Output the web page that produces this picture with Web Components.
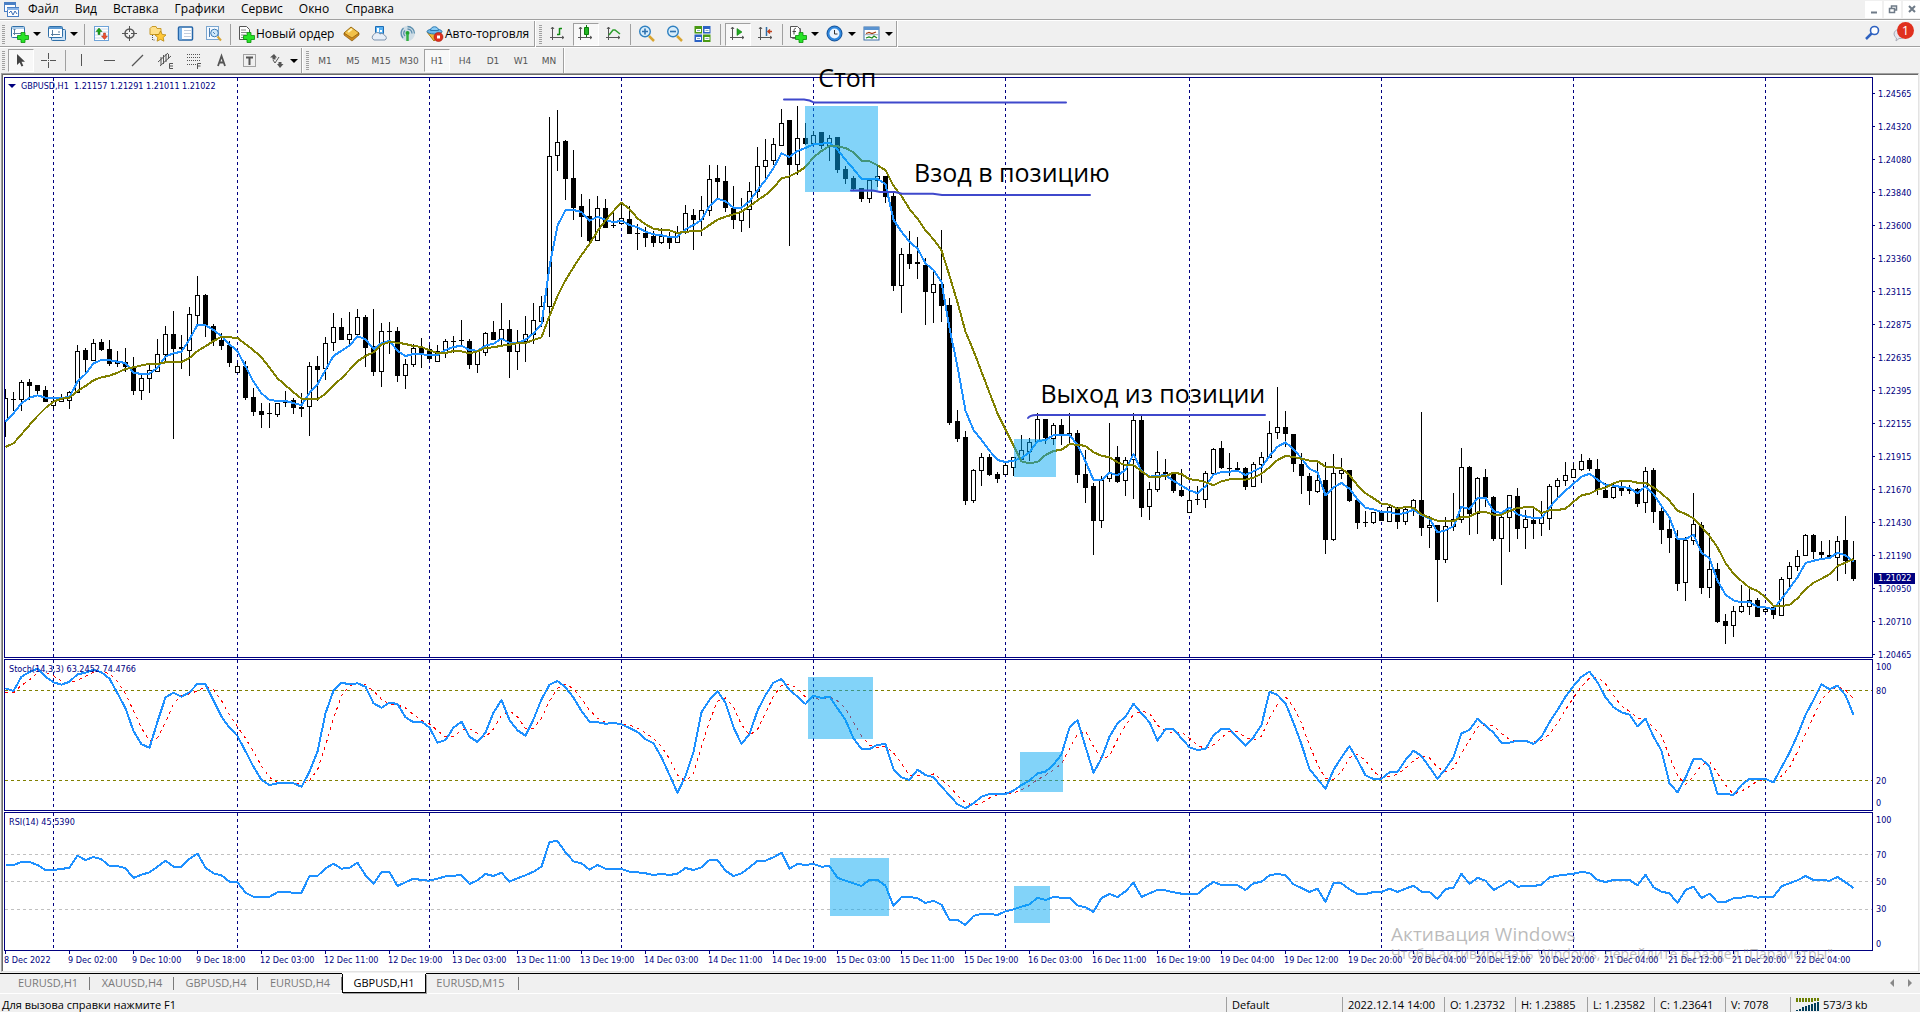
<!DOCTYPE html>
<html lang="ru">
<head>
<meta charset="utf-8">
<title>GBPUSD,H1</title>
<style>
html,body{margin:0;height:100%}
body{background:#f0f0f0;font:12px/16px "Open Sans","Noto Sans",sans-serif;color:#000;--navy:#000080;--tiny:9px/12px "DejaVu Sans Condensed","DejaVu Sans",sans-serif}
</style>
</head>
<body>
<trade-terminal></trade-terminal>
<script>
/* ---------- icons ---------- */
const AX='<path d="M3.500 2v13M1 12.500h14M2 4l1.500-2L5 4M13 11l2 1.500-2 1.500" fill="none" stroke="#555"/>';
const PLUS='<path d="M10 7.500h4v3h3.500v4H14v3h-4v-3H6.500v-4H10z" fill="#27e327" stroke="#0a8f0a" stroke-width=".8"/>';
const ICONS={
app:'<rect x="1.500" y="1.500" width="11" height="9" fill="#fff" stroke="#4a7fc4"/><path d="M1 3h12" stroke="#4a7fc4" stroke-width="2"/><rect x="4.500" y="6.500" width="11" height="9" fill="#fff" stroke="#4a7fc4"/><path d="M4 8h12" stroke="#8ab4e8" stroke-width="2"/><path d="M6 12l2-2 2 4 2-4 2 3" fill="none" stroke="#3d6fb5"/>',
newchart:'<rect x="0.500" y="1.500" width="13" height="11" rx="1" fill="#fff" stroke="#2f6fa8"/><path d="M1 3h12.500" stroke="#5d9ad3"/><path d="M3.500 4v6M2 8.500h9M2.500 5l1-1 1 1" fill="none" stroke="#5a7fa0"/>'+PLUS,
profiles:'<rect x="3.500" y="4.500" width="14" height="11" rx="1" fill="#cfe4f7" stroke="#2f6fa8"/><rect x="0.500" y="1.500" width="14" height="11" rx="1" fill="#fff" stroke="#2f6fa8"/><path d="M1 3h13" stroke="#5d9ad3" stroke-width="2"/><path d="M4.500 5v6M3 9.500h9M10.500 6l1 1-1 1" fill="none" stroke="#5a7fa0"/>',
market:'<rect x="1.500" y="1.500" width="14" height="14" fill="#fff" stroke="#6ea3d8"/><path d="M2 4h13M2 7h13M2 10h13M2 13h13" stroke="#c9d8ea"/><path d="M6 3l3 3.500H7V9.500H5V6.500H3z" fill="#1da51d" stroke="#0b700b" stroke-width=".5"/><path d="M11.500 14.500l3-3.500h-2V8h-2v3h-2z" fill="#f0502c" stroke="#a82a10" stroke-width=".5"/>',
cross:'<circle cx="8.500" cy="8.500" r="4.500" fill="none" stroke="#555" stroke-width="1.500"/><path d="M8.500 1v6M8.500 10v6M1 8.500h6M10 8.500h6" stroke="#555"/>',
folder:'<path d="M1 3.500l2-2h4l1 2h4v6H1z" fill="#ffe08a" stroke="#c79a2a"/><path d="M3.500 10v5h3" fill="none" stroke="#555" stroke-dasharray="1 1"/><path d="M11.500 6l1.700 3.400 3.800.5-2.800 2.600.7 3.700-3.400-1.800-3.400 1.800.7-3.700L6 9.900l3.800-.5z" fill="#ffc83a" stroke="#b8860b" stroke-width=".8"/>',
nav:'<rect x="1.500" y="2" width="14" height="13" rx="1" fill="#fff" stroke="#2565a8" stroke-width="1.500"/><path d="M2 3h3v11.500H2z" fill="#7db4e8"/><path d="M7 5.500h7M7 8.500h7M7 11.500h7" stroke="#c3cedd"/>',
tester:'<rect x="1.500" y="1.500" width="12" height="13" fill="#f4f9ff" stroke="#7ba6cf"/><path d="M4.500 3v9M7.500 5v6" stroke="#4a7fb4"/><circle cx="9.500" cy="8" r="3.800" fill="#cfe8fa" stroke="#3c7ab5"/><path d="M8 7l2 2" stroke="#4a7fb4"/><path d="M12.500 11.500l3.500 4" stroke="#d9a531" stroke-width="2"/>',
order:'<path d="M2.500 1.500h7l3 3v10h-10z" fill="#fff" stroke="#555"/><path d="M4 5h5M4 7.500h6M4 10h5M4 12.500h3" stroke="#888"/>'+PLUS,
book:'<path d="M1 8l7-6 8 6-7 7z" fill="#f2c14a" stroke="#9a6a10"/><path d="M1 8l8 5 7-5v2l-7 6-8-6z" fill="#d08a1e" stroke="#8a5a0c" stroke-width=".7"/><path d="M5 7l4-3" stroke="#fff3b8" stroke-width="2"/>',
term:'<path d="M4.500 1.500h8v7h-8z" fill="#58b0f0" stroke="#1c6cb5"/><path d="M6 3h2v4H6zM9 5h2v2H9z" fill="#fff"/><path d="M3 15a3 3 0 010-5.500A3.500 3.500 0 019 9a3 3 0 014.500 1.500A2.400 2.400 0 0114 15z" fill="#e7eef7" stroke="#7d93ad"/>',
signal:'<circle cx="8.500" cy="8.500" r="7.500" fill="#cfdde6"/><path d="M8.500 1.500a7 7 0 017 7M8.500 4a4.500 4.500 0 014.500 4.500M4 13a7 7 0 01.5-10M6 11a4 4 0 010-5.500" fill="none" stroke="#5d8fae" stroke-width="1.300"/><circle cx="8.500" cy="8" r="2" fill="#1fa32f"/><path d="M8.500 9v7" stroke="#35b045" stroke-width="2.500"/>',
auto:'<path d="M1 7l7 9 8-9z" fill="#f0b93a" stroke="#a87612"/><ellipse cx="8.500" cy="6.500" rx="7.500" ry="2.500" fill="#6db8ea" stroke="#2c78b0"/><path d="M4.500 5.500c0-5 8-5 8 0z" fill="#8accf5" stroke="#2c78b0"/><circle cx="12.500" cy="12" r="4.500" fill="#e0301e" stroke="#a3160b" stroke-width=".6"/><path d="M11 10.500h3v3h-3z" fill="#fff"/>',
bars:AX+'<path d="M10.500 3v7M8 9.500h2.500M10.500 3.500H13" fill="none" stroke="#118a11" stroke-width="1.500"/>',
candles:AX+'<path d="M9.500 0v12" stroke="#0b7d0b"/><path d="M7.500 2.500h4v7h-4z" fill="#22b522" stroke="#0b7d0b"/>',
line:AX+'<path d="M4 10l4-5 2 0 5 4" fill="none" stroke="#2e9e2e" stroke-width="1.500"/>',
zin:'<circle cx="7" cy="6.500" r="5.300" fill="#d8edfb" stroke="#2f80c0" stroke-width="1.400"/><path d="M4 6.500h6M7 3.500v6" stroke="#2f72b0" stroke-width="1.600"/><path d="M11 11l5 5" stroke="#d9a531" stroke-width="2.500"/>',
zout:'<circle cx="7" cy="6.500" r="5.300" fill="#d8edfb" stroke="#2f80c0" stroke-width="1.400"/><path d="M4 6.500h6" stroke="#2f72b0" stroke-width="1.600"/><path d="M11 11l5 5" stroke="#d9a531" stroke-width="2.500"/>',
tile:'<path d="M.5 1h7.500v7.500H.5zM9 9.500h7.500V17H9z" fill="#4a9a14"/><path d="M9 1h7.500v7.500H9zM.5 9.500h7.500V17H.5z" fill="#2c62c4"/><path d="M2 4h5v3H2zM10.500 4h5v3h-5zM2 12h5v3H2zM10.500 12h5v3h-5z" fill="#fff"/><path d="M3 5.500h3M11.500 5.500h3M3 13.500h3M11.500 13.500h3" stroke="#8ab"/>',
scroll:AX+'<path d="M8 3.500v7l5-3.500z" fill="#22a822" stroke="#0b7d0b" stroke-width=".6"/>',
shift:AX+'<path d="M9.500 2v9" stroke="#2f6fa8" stroke-width="1.500"/><path d="M15 6.500h-4M13 4.500l-2 2 2 2" fill="none" stroke="#c2401c" stroke-width="1.500"/>',
indi:'<path d="M3.500 3.500h8v10h-8z" fill="#eee" stroke="#777"/><path d="M1.500 1.500h7l2.500 2.500v8.500h-9.500z" fill="#fff" stroke="#555"/><path d="M7 3.500c-2-.5-2 1-2 6M3.500 6.500H7" fill="none" stroke="#444"/>'+PLUS,
clock:'<circle cx="8.500" cy="8.500" r="7.500" fill="#2d86dd" stroke="#0e4c94"/><circle cx="8.500" cy="8.500" r="5" fill="#eaf4fd"/><path d="M8.500 5v4h3" fill="none" stroke="#333"/>',
tmpl:'<rect x="1" y="2" width="15" height="13" fill="#fff" stroke="#3b6fa8"/><path d="M1 3.500h15" stroke="#5a93d0" stroke-width="3"/><path d="M3 8.500l3-1 3 1 4-1.500" fill="none" stroke="#a33c10" stroke-width="1.300"/><path d="M2 9.700h13" stroke="#9ab"/><path d="M3 13l3-1 3 1 2-2 3 2" fill="none" stroke="#1c8a1c" stroke-width="1.300"/>',
cursor:'<path d="M5 2v11l2.700-2.500 1.800 4 1.800-.8-1.800-4H13z" fill="#444"/>',
thin:'<path d="M8.500 1v6M8.500 10v6M1 8.500h6M10 8.500h6M8 8.500h1" stroke="#555"/>',
vl:'<path d="M8.500 2v12" stroke="#555"/>',
hl:'<path d="M3 8.500h11" stroke="#555"/>',
tl:'<path d="M3 14L14 3" stroke="#555" stroke-width="1.300"/>',
ch:'<path d="M1 10L11 1M3 14L14 4M4 5v8M6.500 3v9M9 2v8M11.500 2v5" stroke="#555" fill="none"/><path d="M16 11.500h-3.500v5H16M12.500 14H16" fill="none" stroke="#555"/>',
fib:'<path d="M2 2.500h13M2 5.500h13M2 8.500h13M2 12.500h9" stroke="#555" stroke-dasharray="1 1"/><path d="M12.500 17v-5.500H16M12.500 14h3" fill="none" stroke="#555"/>',
lbl:'<rect x="2.500" y="2.500" width="12" height="12" fill="none" stroke="#555" stroke-dasharray="1 1"/><path d="M5 5.500h7M8.500 5v8" stroke="#555" stroke-width="2" fill="none"/>',
txt:'<path d="M5 14L8.500 4 12 14M6 10.500h5" stroke="#555" stroke-width="1.800" fill="none"/>',
arr:'<path d="M2 5.500l4-3.500 3 3.500-1.500 0 0 2-3 0 0-2zM9 12l1.500 0 0-2 3 0 0 2 2 0-3.500 4z" fill="#555"/><path d="M5 8l2 3 4-6" fill="none" stroke="#555"/>',
find:'<circle cx="10.500" cy="5.500" r="4" fill="#fff" stroke="#2f62c0" stroke-width="1.600"/><path d="M7.500 8.500L2 14" stroke="#2f62c0" stroke-width="2.500"/>',
chat:'<path d="M2 9a6 5 0 1112 0 6 5 0 01-7 4.500L4 16l.5-3A5 5 0 012 9z" fill="#e4e6ee" stroke="#a9acb8"/>',
conn:'<path d="M1 1v4M4 1v4M7 1v4M10 1v4M13 1v4M16 1v4M19 1v3M22 1v3" stroke="#6b7f00" stroke-width="2"/><path d="M1 14v-1M4 14v-2M7 14V10M10 14V9M13 14V8M16 14V7M19 14V6M22 14V5" stroke="#003c5a" stroke-width="2"/>'
};
const def=(tag,css,html)=>customElements.define(tag,class extends HTMLElement{
  connectedCallback(){
    if(this.shadowRoot)return;
    const r=this.attachShadow({mode:'open'});
    r.innerHTML='<style>'+css+'</style>'+(typeof html==='function'?html(this):html);
  }
});
def('mt-icon',':host{display:block}svg{display:block}',e=>{
  const w=+(e.getAttribute('w')||18);
  return `<svg width="${w}" height="18" viewBox="0 0 ${w} 18" aria-hidden="true">${ICONS[e.getAttribute('name')]}</svg>`;
});

/* ---------- tool bars ---------- */
def('tool-button',`:host{display:flex;width:28px}
:host([menu]){width:37px}:host([wide]){width:105px}:host([wide=more]){width:112px}
button{all:unset;box-sizing:border-box;flex:1;display:flex;align-items:center;justify-content:center;height:23px;white-space:nowrap;color:#000;border:1px solid transparent;margin:0 1px}
:host([wide]) button{justify-content:flex-start;padding-left:2px;gap:1px}
:host([on]) button{border-color:#a0a0a0 #fff #fff #a0a0a0;background:#f8f8f8}
:host([period]) button{color:#555;font:9px/12px "DejaVu Sans",sans-serif}
i{border:4px solid transparent;border-top-color:#000;border-bottom:0;margin-left:4px}`,
e=>`<button title="${e.title}" aria-pressed="${e.hasAttribute('on')}">${e.getAttribute('icon')?`<mt-icon name="${e.getAttribute('icon')}"></mt-icon>`:''}<slot></slot>${e.hasAttribute('menu')?'<i></i>':''}</button>`);
def('tool-group',`:host{display:flex;align-items:center;box-sizing:border-box;height:100%;border-right:1px solid #a0a0a0;box-shadow:1px 0 #fff;margin-right:2px}
.g{width:3px;height:19px;margin:0 2px;background:repeating-linear-gradient(#a0a0a0 0 1px,#f0f0f0 1px 2px)}`,'<span class="g"></span><slot></slot>');
def('tool-sep',':host{display:block;width:1px;height:21px;background:#a0a0a0;margin:0 var(--gap,3px)}','');
def('tool-row',':host{display:flex;align-items:center;box-sizing:border-box;height:27px;border-bottom:1px solid #fff;box-shadow:inset 0 -1px #a0a0a0}:host([last]){height:25px;border:0;box-shadow:none}','<slot></slot>');

/* ---------- menu ---------- */
def('menu-bar',`:host{display:flex;align-items:center;box-sizing:border-box;height:21px;padding-left:3px;border-bottom:1px solid #fff;box-shadow:inset 0 -1px #a0a0a0}
nav{display:flex;flex:1;margin-left:-1px}
a{color:#000;text-decoration:none;padding:0 8px 2px}
button{all:unset;width:17px;height:17px;background:#fff;margin:0 0 2px 2px;display:grid;place-items:center}`,
()=>`<mt-icon name="app"></mt-icon><nav>${['Файл','Вид','Вставка','Графики','Сервис','Окно','Справка'].map(t=>`<a href="#">${t}</a>`).join('')}</nav>
${['M2 8.500h6','M1.500 4.500h5v4h-5zM3.500 4V2h5v4H7','M2 2l6 6M8 2l-6 6'].map((d,i)=>`<button title="${['Свернуть','Восстановить','Закрыть'][i]}"><svg width="10" height="10"><path d="${d}" fill="none" stroke="#6f7b88" stroke-width="${i==1?1.5:2}"/></svg></button>`).join('')}`);

/* ---------- quotes: high, body top, body bottom, low, body kind; one entry per bar ---------- */
const BARS=[[70,`958,985,1050,1102w 966,987,990,1025b 930,937,989,1025w 928,936,948,992b 945,945,963,975b 950,960,998,998b 985,993,1007,1018w 972,985,995,998w 963,967,992,1017w 826,844,968,971w 834,840,870,910b 807,820,871,873w 807,816,840,843b 811,837,882,890b 843,878,882,893b 834,876,893,908b 861,891,963,977b 914,925,961,992w 885,900,925,971w 807,853,905,906w 768,793,854,880w 723,792,837,1109b 795,833,837,899b 711,733,842,920w 618,676,737,765w 672,675,767,801b 764,768,815,830b 790,810,828,842b 815,825,879,893b 880,889,907,910w 873,888,984,990b 954,981,1026,1038b 1000,1023,1035,1076b 1000,1031,1034,1074b 1000,1000,1034,1041w 965,996,1001,1012b 985,992,1014,1034b 969,1011,1017,1041b 876,889,1010,1100w 858,888,900,995b 801,820,895,930w 729,772,818,843w 744,771,810,812b 726,793,808,832w 717,742,794,797w 735,741,834,893b 717,828,906,920b 759,784,905,953w 757,783,788,852b 773,783,918,936b 868,883,916,957w 824,836,883,891w 804,832,854,896b 825,838,869,872b 825,845,875,877w 808,814,850,866w 798,813,818,849b 750,810,815,832b 807,813,885,897b 840,845,884,911w
786,790,848,860w 753,786,810,811b 699,778,806,830w 750,777,846,926b 780,818,845,902w 738,793,815,876w 701,751,793,822w 678,709,755,772w 141,259,710,801w 120,217,257,303w 210,213,327,390b 240,324,414,450b 372,408,441,501b 387,438,513,522b 378,415,512,515w 387,414,474,474b 429,467,470,474b 400,445,460,461w 408,447,492,492b 463,489,494,540b 473,489,504,531b 485,500,519,531b 474,499,518,522w 487,504,519,537b 468,487,518,519w 405,430,487,492w 417,435,450,540b 378,421,448,498w 285,328,421,440w 285,324,336,385b 288,333,414,427b 348,414,450,477b 384,425,450,486w 336,364,418,474w 231,289,365,386w 208,271,290,328w 205,223,272,285w 117,160,226,228w 150,150,285,528b 108,205,283,315w 159,204,222,225b 183,196,221,227w 186,186,228,237b 195,205,226,273w 201,201,300,309b 288,297,327,342b 320,324,357,362b 354,354,387,396b 325,331,385,399w 288,319,330,351w 318,318,381,399b 368,378,648,665b 534,553,647,729w 484,552,582,597b 501,576,584,627b 564,585,668,765b 605,643,668,759w 480,642,708,756b 685,705,1059,1065b 1020,1053,1107,1116b
1083,1101,1293,1305b 1197,1201,1292,1299w 1151,1162,1202,1248w 1152,1161,1215,1218b 1206,1212,1227,1239b 1180,1187,1213,1217w 1162,1162,1192,1220w 1095,1141,1167,1176w 1104,1117,1143,1173w 1029,1048,1115,1118w 1047,1047,1104,1122b 1061,1066,1106,1125w 1047,1065,1100,1125b 1029,1090,1096,1124w`],
[360,`210,219,345,369b 271,342,384,430b 370,378,483,585b 349,360,482,504w 189,339,355,367w 258,291,366,369b 291,301,362,408w 159,181,299,417w 165,180,444,471b 366,388,440,480w 273,337,388,396w 297,336,342,362b 337,343,393,399b 327,390,408,411b 395,421,458,460w 378,417,420,436b 333,340,419,444w 264,268,340,345w 243,264,325,328b 279,324,329,348b 306,324,330,333b 321,324,381,390b 306,313,380,381w 276,292,313,369w 183,220,291,293w 81,202,217,237w 153,201,222,262b 222,222,312,336b 280,312,348,402b 339,348,393,435b 306,361,395,399w 306,360,540,582b 282,340,539,543w 294,331,341,357w 330,330,423,426b 420,420,489,507b 453,486,489,501b 457,457,488,492w 457,457,483,484b 437,442,485,487w 441,441,486,507b 443,448,485,495w
417,421,451,468w 156,420,504,528b 470,496,503,564w 495,495,600,726b 471,499,599,609w 399,478,499,513w 264,322,478,489w 318,321,462,525b 351,355,460,522w 327,351,414,441b 408,411,537,543b 456,472,536,675w 405,406,472,576w 384,408,507,537b 450,478,503,567w 445,480,492,537b 423,472,490,528w 372,379,475,510w 354,361,379,416w 306,346,361,378w 310,328,352,354w 282,304,328,333w 294,300,327,333b 297,327,390,405b 369,390,414,415b 372,382,412,417w 360,380,393,409b 375,389,393,402b 384,387,432,441b 321,334,427,459w 324,330,456,489b 432,453,510,552b 469,507,534,579b 510,534,672,693b 531,541,667,723w 399,492,541,557w 486,495,684,702b 519,628,682,714w 609,627,786,789b 762,783,798,852b 739,754,796,831w 675,739,754,759w 684,721,739,765w 714,720,771,771b 738,748,755,760w 735,742,765,777b 651,658,766,768w 606,619,655,684w 570,589,619,633w 522,526,586,588w 522,525,578,598b 543,576,587,594b 540,585,592,598b 528,544,592,663w 468,540,603,642b 543,600,657,663b`]];
const FAST=[[70,'1055 1030 1000 983 976 983 984 984 981 935 912 880 870 871 875 879 908 912 911 893 860 850 845 808 764 766 780 798 823 844 889 935 970 990 993 993 999 1006 969 943 900 858 842 827 799 808 837 820 812 843 858 852 853 855 855 840 831 827 840 842 827 821 806 818 819 809 790 763 590 467 420 420 426 452 440 450 457 452 465 472 485 493 496 501 500 478 465 450 408 386 394 413 413 394 361 330 294 250 261 243 234 223 221 218 239 269 297 326 326 326 343 449 485 515 536 580 600 636 775 890 1022 1080 1110 1142 1170 1176 1172 1164 1147 1114 1110 1096 1095 1095'],
[360,'255 304 360 360 338 346 330 282 333 350 347 346 362 377 391 400 379 344 336 335 332 345 334 322 288 260 247 268 295 327 337 406 382 369 386 418 444 448 456 456 463 459 449 466 475 517 511 499 440 447 414 413 454 459 443 463 469 474 474 443 414 392 371 350 341 359 374 377 381 384 400 379 402 438 472 537 537 524 578 595 662 704 721 727 726 740 742 748 717 685 652 609 602 597 594 578 586 605']];
const SLOW=[[70,'1131 1120 1093 1065 1038 1014 995 986 983 963 948 931 922 917 908 897 892 886 882 882 877 876 876 864 843 829 813 800 802 804 822 841 862 893 925 946 967 986 987 987 972 946 925 900 874 858 847 824 816 818 822 828 831 841 849 849 843 844 850 844 834 832 827 824 820 819 810 802 738 678 631 592 555 522 483 452 423 398 417 445 463 476 480 481 489 485 484 482 465 449 440 433 425 409 391 375 353 325 319 307 291 262 243 228 229 234 247 272 274 286 301 347 378 417 446 481 508 541 617 697 785 842 905 968 1030 1078 1127 1174 1180 1176 1155 1143 1139 1123'],
[360,'254 258 277 287 292 307 315 315 334 351 350 349 338 342 358 360 367 376 364 358 357 359 353 341 322 300 288 291 296 302 304 320 322 325 345 376 400 415 431 434 446 441 443 463 473 482 484 483 471 470 457 456 464 464 453 444 442 442 459 451 450 446 425 406 401 389 383 370 362 363 368 369 382 400 422 452 462 475 500 528 562 609 641 663 683 693 712 738 738 735 715 688 668 656 643 618 608 597']];
const STOCH=[[650,'115 123 80 66 56 80 97 104 95 73 68 59 67 86 130 175 243 283 293 215 142 128 140 127 101 103 152 200 233 258 304 350 390 405 400 398 400 410 365 305 190 122 98 103 100 110 160 173 158 162 202 217 215 233 278 270 233 215 260 276 248 188 150 210 241 257 208 148 104 93 112 143 183 215 217 221 219 223 234 246 268 280 322 375 428 378 305 187 150 123 158 232 282 252 182 135 98 87 120 140 162 137 144 140 175 210 265 297 297 284 283 358 382 390 359 375 382 410 436 463 475 460 440 432 432 432 422 405 392 370 365 344 313 233 210 290 368 325 260 220 200 161 190 217 272 237 237 265 292 300 297 256 237 237 262 288 262 225 125 135 160 218 283 357 387 416 360 322 288 330 376 387 386 367 366 330 302 318 352 386 357 322 250 240 206 227 248 278 278 272 272 282 260 217 180 140 108 80 65 97 142 172 187 194 229 206 260 302 400 427 383 327 327 350 432 432 435 405 387 387 387 397 352 308 255 195 150 103 118 107 136 195']];
const RSI=[[650,'645 645 636 636 645 660 660 657 653 617 630 621 628 648 648 655 684 674 667 650 632 650 650 626 611 653 670 676 695 697 728 740 740 740 727 726 728 728 678 678 655 641 656 653 638 676 702 666 666 708 697 686 690 692 686 679 677 675 702 691 672 678 668 695 685 676 665 650 576 573 607 634 640 659 645 656 657 657 665 667 670 675 672 675 671 654 660 652 630 630 662 678 670 652 633 632 622 608 656 642 645 642 650 648 683 692 700 708 690 690 707 768 741 741 745 759 752 764 810 810 825 798 791 792 795 784 778 770 763 743 750 741 743 743 766 772 786 744 732 741 724 698 741 730 720 721 727 731 732 732 712 696 705 705 706 720 700 695 676 672 676 703 714 726 716 756 700 700 718 732 732 726 726 716 726 716 707 725 726 747 717 713 671 702 683 692 720 707 692 710 708 708 704 682 677 674 671 666 669 690 696 690 690 690 706 674 712 725 730 759 720 710 744 731 756 756 745 743 737 743 740 740 709 700 691 678 690 690 692 681 697 714']];
const unpack=g=>g.flatMap(([base,s])=>s.split(/\s+/).map(v=>base+v/3));
const X=i=>5+8*i;
const path=(v,c,w=2,extra='')=>`<polyline points="${v.map((y,i)=>X(i)+.5+','+y.toFixed(1)).join(' ')}" fill="none" stroke="${c}" stroke-width="${w}" stroke-linejoin="round" ${extra}/>`;
const candles=()=>{let i=0,o='';
  for(const [base,s] of BARS)for(const q of s.split(/\s+/)){
    const [h,t,b,l]=q.slice(0,-1).split(',').map(v=>Math.floor(base+v/3)),x=X(i++);
    o+=`<path d="M${x}.5 ${h}V${l}" stroke="#000"/>`;
    o+=q.endsWith('b')?`<rect x="${x-2}" y="${t}" width="5" height="${Math.max(1,b-t)}"/>`
      :`<rect x="${x-1.5}" y="${t+.5}" width="4" height="${Math.max(2,b-t)}" fill="#fff" stroke="#000"/>`;
  }return o};
const DAYS=[53,237,429,621,813,1005,1189,1381,1573,1765];
const days=(a,b)=>DAYS.map(x=>`<path d="M${x}.5 ${a}V${b}" stroke="#000080" stroke-dasharray="3 3"/>`).join('');
const level=(y,c)=>`<path d="M5 ${y}.5H1872" stroke="${c}" stroke-dasharray="3 3"/>`;
const zone=(x,y,w,h)=>`<rect x="${x}" y="${y}" width="${w}" height="${h}" fill="#05a8f3" fill-opacity=".5"/>`;
const pen=d=>`<path d="${d}" fill="none" stroke="#3f48cc" stroke-width="2" stroke-linecap="round"/>`;
const sig=unpack(STOCH);
const avg=sig.map((v,i)=>(v+(sig[i-1]??v+4)+(sig[i-2]??v+8))/3);
const PANES={
 price:{top:78,h:579,draw:()=>`<g shape-rendering="crispEdges">${days(78,657)}${candles()}${path(unpack(FAST),'#1e90ff')}${path(unpack(SLOW),'#808000')}${zone(805,106,73,86)}${zone(1014,439,42,38)}</g>`
  +pen('M784 99.500H804Q810 100 814 102.500H1066')+pen('M851 190.500H873L880 192H895L902 193.700H933L942 195H1090')+pen('M1028 418Q1030 415.200 1036 415H1265')},
 stoch:{top:660,h:150,draw:()=>`<g shape-rendering="crispEdges">${days(660,810)}${level(690,'#808000')}${level(780,'#808000')}${path(avg,'#f00',1,'stroke-dasharray="3 4"')}${path(sig,'#1e90ff')}${zone(808,677,65,62)}${zone(1020,752,43,40)}</g>`},
 rsi:{top:813,h:137,draw:()=>`<g shape-rendering="crispEdges">${days(813,950)}${level(854,'#c0c0c0')}${level(881,'#c0c0c0')}${level(909,'#c0c0c0')}${path(unpack(RSI),'#1e90ff')}${zone(830,858,59,58)}${zone(1014,886,36,37)}</g>`}
};
def('chart-pane',`:host{display:grid;grid-template-columns:minmax(0,1fr) 45px;min-height:0}
.plot{position:relative;min-height:0;border:1px solid var(--navy)}
svg{position:absolute;inset:0;width:100%;height:100%;display:block}
.t{position:absolute;left:4px;top:3px;display:flex;align-items:center;gap:5px;font:var(--tiny);color:var(--navy);white-space:pre}
:host([kind=price]) .t{left:3px;top:2px}`,
e=>{const p=PANES[e.getAttribute('kind')];return `<div class="plot"><svg viewBox="5 ${p.top} 1867 ${p.h}" preserveAspectRatio="none" role="img">${p.draw()}</svg><div class="t"><slot></slot></div></div><slot name="axis"></slot>`});
def('price-axis',`:host{display:flex;flex-direction:column;justify-content:space-between;position:relative;padding-top:11px;box-sizing:border-box;font:var(--tiny);color:var(--navy)}
span{display:flex;align-items:center;height:11px}span::before{content:"";width:2px;height:1px;background:var(--navy);margin-right:3px}
b{position:absolute;left:1px;right:3px;top:85.3%;height:11px;line-height:11px;background:var(--navy);color:#fff;font-weight:400;padding-left:4px;box-sizing:border-box}
span:last-of-type{margin-bottom:-2px}`,
()=>'24565 24320 24080 23840 23600 23360 23115 22875 22635 22395 22155 21915 21670 21430 21190 20950 20710 20465'.split(' ').map(v=>`<span>1.${v}</span>`).join('')+'<b>1.21022</b>');
def('level-axis',':host{display:block;position:relative;font:var(--tiny);color:var(--navy)}span{position:absolute;left:3px;transform:translateY(-50%)}',
e=>e.getAttribute('marks').split(' ').map(m=>{const [v,p]=m.split(':');return `<span style="top:${p}%">${v}</span>`}).join(''));
def('time-axis',':host{display:flex;height:20px;box-sizing:border-box;font:var(--tiny);color:var(--navy);overflow:hidden}span{flex:none;width:64px;white-space:nowrap}span::before{content:"";display:block;width:1px;height:3px;margin:0 0 0 1px;background:var(--navy)}',
()=>'8 Dec 2022|9 Dec 02:00|9 Dec 10:00|9 Dec 18:00|12 Dec 03:00|12 Dec 11:00|12 Dec 19:00|13 Dec 03:00|13 Dec 11:00|13 Dec 19:00|14 Dec 03:00|14 Dec 11:00|14 Dec 19:00|15 Dec 03:00|15 Dec 11:00|15 Dec 19:00|16 Dec 03:00|16 Dec 11:00|16 Dec 19:00|19 Dec 04:00|19 Dec 12:00|19 Dec 20:00|20 Dec 04:00|20 Dec 12:00|20 Dec 20:00|21 Dec 04:00|21 Dec 12:00|21 Dec 20:00|22 Dec 04:00'.split('|').map(t=>`<span>${t}</span>`).join(''));
def('chart-note',':host{position:absolute;font:25px/32px "Open Sans","Noto Sans",sans-serif;color:#000;white-space:nowrap}:host([mark]){font-size:19px;line-height:24px;color:rgba(120,120,120,.5)}','<slot></slot>');
def('chart-window',`:host{position:relative;display:flex;flex-direction:column;gap:1px;flex:1;min-height:0;box-sizing:border-box;background:#fff;border:1px solid #a0a0a0;border-right-color:#e3e3e3;border-bottom-color:#e3e3e3;box-shadow:inset 1px 1px #696969;padding:3px 0 0 2px;margin:0 1px 1px}
chart-pane{flex:var(--g) 1 0}chart-pane:last-of-type{margin-bottom:-1px}
p{margin:0;font-size:14px;line-height:16px}
.arrow{border:4px solid transparent;border-top-color:var(--navy);border-bottom:0}`,
`<chart-pane kind="price" style="--g:581"><span class="arrow"></span><span>GBPUSD,H1  1.21157 1.21291 1.21011 1.21022</span><price-axis slot="axis"></price-axis></chart-pane>
<chart-pane kind="stoch" style="--g:152"><span>Stoch(14,3,3) 63.2452 74.4766</span><level-axis slot="axis" marks="100:5 80:21 20:80 0:95"></level-axis></chart-pane>
<chart-pane kind="rsi" style="--g:139"><span>RSI(14) 45.5390</span><level-axis slot="axis" marks="100:6 70:31 50:50 30:70 0:95"></level-axis></chart-pane>
<time-axis></time-axis>
<chart-note style="left:42.600%;top:-13px">Стоп</chart-note>
<chart-note style="left:47.600%;top:9.100%">Взод в позицию</chart-note>
<chart-note style="left:54.200%;top:33.800%">Выход из позиции</chart-note>
<chart-note mark style="left:72.500%;top:94.500%">Активация Windows<p>Чтобы активировать Windows, перейдите в раздел "Параметры".</p></chart-note>`);

/* ---------- bottom bars ---------- */
def('chart-tabs',`:host{display:flex;align-items:flex-start;height:21px;box-sizing:border-box;border-top:1px solid #000;border-bottom:1px solid #fff;padding-left:6px;font-size:11px}
button{all:unset;box-sizing:border-box;width:84px;height:18px;line-height:18px;text-align:center;color:#7a7a7a;background:linear-gradient(#7a7a7a,#7a7a7a) right center/1px 13px no-repeat}
button.on{color:#000;background:#fff;border:1px solid #000;border-top:0;height:19px;box-shadow:0 -1px #fff,1px 1px #a0a0a0}
button:last-of-type{width:93px;padding-right:4px}
i{border:4px solid transparent;margin-top:5px}.l{margin-left:auto;border-right-color:#888;border-left:0}.r{border-left-color:#888;border-right:0;margin:5px 8px 0 14px}`,
()=>['EURUSD,H1','XAUUSD,H4','GBPUSD,H4','EURUSD,H4','GBPUSD,H1','EURUSD,M15'].map((t,i)=>`<button${i==4?' class="on"':''}>${t}</button>`).join('')+'<i class="l"></i><i class="r"></i>');
def('status-bar',`:host{display:flex;height:18px;align-items:flex-end;font-size:11px}
span{box-sizing:border-box;height:15px;line-height:16px;padding-left:5px;border-left:1px solid #a0a0a0;white-space:nowrap;display:flex}
span:first-of-type{flex:1;border:0;padding-left:2px}mt-icon{margin-right:3px}`,
`<span>Для вызова справки нажмите F1</span><span style="width:116px">Default</span><span style="width:102px">2022.12.14 14:00</span><span style="width:71px">O: 1.23732</span><span style="width:72px">H: 1.23885</span><span style="width:67px">L: 1.23582</span><span style="width:71px">C: 1.23641</span><span style="width:65px">V: 7078</span><span style="width:130px"><mt-icon name="conn" w="24"></mt-icon>573/3 kb</span>`);

const tb=(icon,title,extra='',text='')=>`<tool-button icon="${icon}" title="${title}" ${extra}>${text}</tool-button>`;
def('trade-terminal',`:host{display:flex;flex-direction:column;min-height:100vh}
.right{margin-left:auto;display:flex;align-items:center;gap:10px;padding-right:10px}
.right button{all:unset;position:relative}
.right b{position:absolute;left:5px;top:-3px;width:17px;height:17px;border-radius:9px;background:#e0301e;color:#fff;font:13px/17px "Open Sans",sans-serif;text-align:center}`,
`<menu-bar></menu-bar>
<tool-row><tool-group>${tb('newchart','Новый график','menu')}${tb('profiles','Профили','menu')}<tool-sep></tool-sep>${tb('market','Обзор рынка')}${tb('cross','Окно данных')}${tb('folder','Навигатор')}${tb('nav','Терминал')}${tb('tester','Тестер')}<tool-sep style="--gap:2px"></tool-sep>${tb('order','Новый ордер','wide','Новый ордер')}${tb('book','MetaEditor')}${tb('term','Терминал')}${tb('signal','Сигналы')}${tb('auto','Авто-торговля','wide="more"','Авто-торговля')}</tool-group>
<tool-group>${tb('bars','Бары')}${tb('candles','Свечи','on')}${tb('line','Линия')}<tool-sep style="--gap:2px"></tool-sep>${tb('zin','Увеличить')}${tb('zout','Уменьшить')}${tb('tile','Окна')}<tool-sep></tool-sep>${tb('scroll','Автопрокрутка','on')}${tb('shift','Сдвиг')}<tool-sep style="--gap:2px"></tool-sep>${tb('indi','Индикаторы','menu')}${tb('clock','Периоды','menu')}${tb('tmpl','Шаблоны','menu')}</tool-group>
<div class="right"><button title="Поиск"><mt-icon name="find"></mt-icon></button><button title="Сообщения"><mt-icon name="chat"></mt-icon><b>1</b></button></div></tool-row>
<tool-row last><tool-group>${tb('cursor','Курсор','on')}${tb('thin','Перекрестие')}<tool-sep style="--gap:2px"></tool-sep>${tb('vl','Вертикальная линия')}${tb('hl','Горизонтальная линия')}${tb('tl','Трендовая линия')}${tb('ch','Канал')}${tb('fib','Фибоначчи')}${tb('txt','Текст')}${tb('lbl','Метка')}${tb('arr','Стрелки','menu')}</tool-group>
<tool-group>${['M1','M5','M15','M30','H1','H4','D1','W1','MN'].map(t=>`<tool-button period ${t=='H1'?'on':''} title="${t}">${t}</tool-button>`).join('')}</tool-group></tool-row>
<chart-window></chart-window>
<chart-tabs></chart-tabs>
<status-bar></status-bar>`);
</script>
</body>
</html>
